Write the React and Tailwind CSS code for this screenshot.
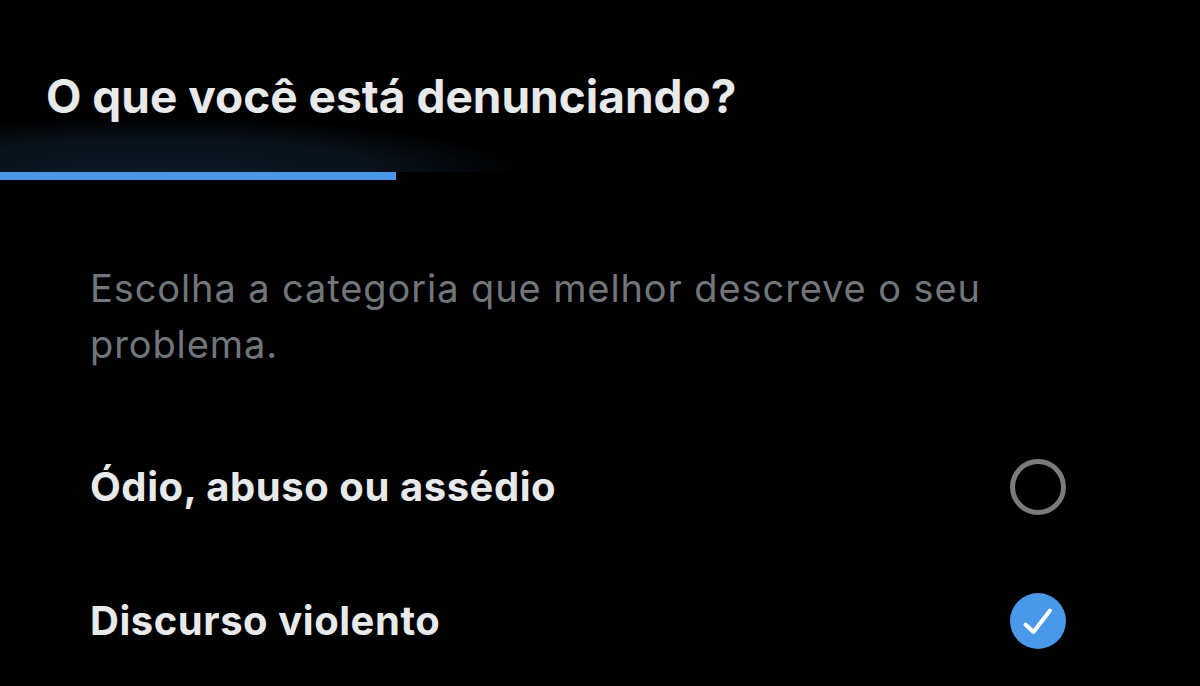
const options = [
  { label: 'Ódio, abuso ou assédio', checked: false },
  { label: 'Discurso violento', checked: true },
]

function Radio({ checked }) {
  if (checked) {
    return (
      <svg width="56" height="56" viewBox="0 0 56 56" className="shrink-0">
        <circle cx="28" cy="28" r="28" fill="#4a98e9" />
        <path d="M15.5 31.5 L23.5 39 L40 17.5" fill="none" stroke="#fff" strokeWidth="4" strokeLinecap="round" strokeLinejoin="round" />
      </svg>
    )
  }
  return (
    <svg width="56" height="56" viewBox="0 0 56 56" className="shrink-0">
      <circle cx="28" cy="28" r="25.5" fill="none" stroke="#7b7b7d" strokeWidth="5" />
    </svg>
  )
}

export default function App() {
  return (
    <div className="w-[1200px] h-[686px] overflow-hidden bg-black font-['Inter','Noto_Sans',sans-serif]">
      {/* Header */}
      <div className="relative">
        <div className="absolute left-0 top-[118px] w-[520px] h-[54px] bg-[radial-gradient(ellipse_at_30%_100%,#0e1a26_0%,#09121b_42%,transparent_72%)]" />
        <h1 className="relative pl-[46px] pt-[68px] text-[46px] leading-[56px] font-bold text-[#e7e9ea]">
          O que você está denunciando?
        </h1>
        <div className="relative mt-[48px] w-[396px] h-2 bg-[#4a97e8]" />
      </div>

      {/* Description */}
      <p className="pl-[90px] pr-[180px] mt-[80px] text-[38px] leading-[56px] tracking-[0.9px] text-[#71767b]">
        Escolha a categoria que melhor descreve o seu problema.
      </p>

      {/* Options */}
      <div className="mt-[48px] flex flex-col">
        {options.map((o) => (
          <div key={o.label} className="flex items-center justify-between pl-[90px] pr-[134px] h-[134px]">
            <span className="text-[40px] leading-[48px] tracking-[0.55px] font-bold text-[#e7e9ea]">{o.label}</span>
            <Radio checked={o.checked} />
          </div>
        ))}
      </div>
    </div>
  )
}
